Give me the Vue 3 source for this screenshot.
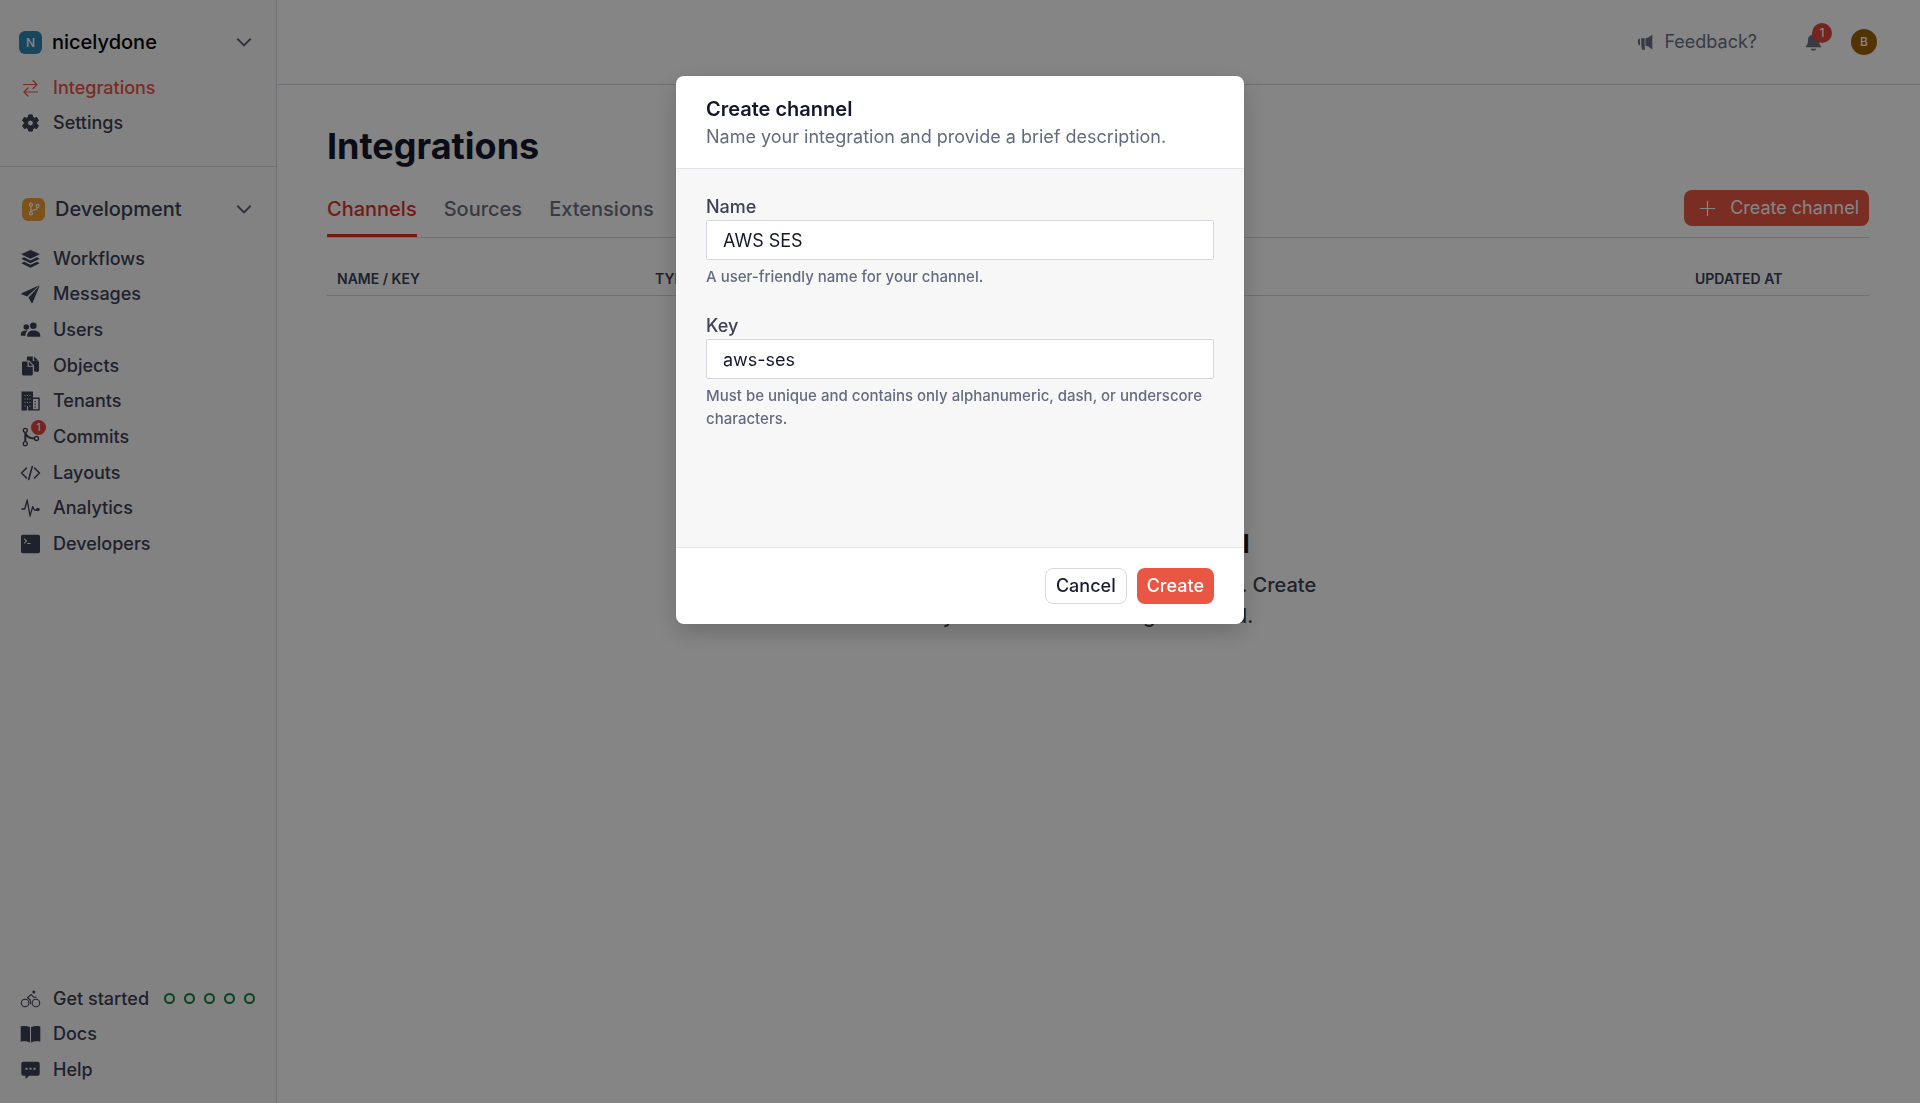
<script setup>
import { ref } from 'vue'

const iconPaths = {
  gear: '<path fill-rule="evenodd" d="M8.2 1h3.600l.5 2.400 1.600.9 2.300-.8 1.800 3.100-1.800 1.600v1.800l1.800 1.600-1.800 3.100-2.300-.8-1.600.9-.5 2.400H8.200l-.5-2.400-1.600-.9-2.300.8L2 11.600 3.800 10V8.200L2 6.600l1.800-3.100 2.300.8 1.600-.9zM10 6.200a2.900 2.900 0 1 0 0 5.800 2.900 2.900 0 0 0 0-5.800z" transform="translate(0 .9)" stroke="currentColor" stroke-width="1" stroke-linejoin="round"/>',
  integrations: '<path d="M3 6.500h13.500M12.500 2.500l4 4-4 4M17 14H3.500M7.500 10l-4 4 4 4" fill="none" stroke="currentColor" stroke-width="1.200" stroke-linecap="round" stroke-linejoin="round"/>',
  workflows: '<path d="M10 1.200 18.800 5.200 10 9.400 1.200 5.200z" stroke="currentColor" stroke-width=".6" stroke-linejoin="round"/><path d="M3.600 8.300 10 11.400l6.400-3.100 2.400 1.200v.5L10 14.200 1.200 10v-.5z"/><path d="M3.600 12.700l6.400 3.100 6.400-3.100 2.400 1.200v.5L10 18.700l-8.800-4.300v-.5z"/>',
  messages: '<path d="M18.900 1.200 1 9.300v1l5.600 2.100z"/><path d="M19.400 1.200 8 13.400l3.100 5.600h.9z"/>',
  users: '<circle cx="12.800" cy="5.800" r="3.300"/><path d="M6.800 16.800v-1.500c0-3.200 2.500-4.800 6.200-4.800s6.700 1.600 6.700 4.800v1.500z"/><circle cx="5.800" cy="7" r="2.800"/><path d="M.3 15.800v-1.300c0-2.700 2-4 5.200-4l1.700.1c-1.600 1.200-2.300 2.800-2.200 5.200z"/>',
  objects: '<path d="M7.500.5h4.800V5h5.200v9.300c0 .7-.5 1.200-1.200 1.200H13.500V9.500L8.800 4.500H6.300V1.700C6.300 1 6.800.5 7.500.5z"/><path d="M13.500.5l4.600 4.200h-4.600zM18.500 5.500v9c0 .7-.5 1.200-1.200 1.200H15V5.500z"/><path d="M2.700 5.500H7v5.300h5.300v7.500c0 .7-.5 1.200-1.200 1.200H2.700c-.7 0-1.200-.5-1.200-1.200V6.700c0-.7.500-1.200 1.200-1.200z"/><path d="M8.200 5.500l4.200 4.200H8.200z"/>',
  tenants: '<path fill-rule="evenodd" d="M1 .5h11.500v6h6.700V19.500H1zM4 4v1h1V4zm2.500 0v1h1V4zM9 4v1h1V4zM4 7.500v1h1v-1zm2.500 0v1h1v-1zm2.500 0v1h1v-1zM4 11v1h1v-1zm2.500 0v1h1v-1zm2.500 0v1h1v-1zM6.500 15v4.500h1V15zM4 14.500v1h1v-1zm5 0v1h1v-1zM12.500 8v10.200h5.300V8z"/><path d="M14 10h1.200v1.200H14zM14 12.800h1.200V14H14zM14 15.500h1.200v1.200H14z"/>',
  commits: '<g fill="none" stroke="currentColor"><circle cx="4.800" cy="3.300" r="2" stroke-width="1.300"/><circle cx="4.800" cy="16.700" r="2" stroke-width="1.300"/><circle cx="16" cy="11.500" r="2" stroke-width="1.300"/><path d="M4.800 5.500v9M5 6c1 3.500 4 5.500 9 5.500" stroke-width="2"/></g>',
  layouts: '<path d="M6 5 1 10l5 5M14 5l5 5-5 5M11.800 3.500l-3.600 13" fill="none" stroke="currentColor" stroke-width="1.500" stroke-linecap="round" stroke-linejoin="round"/>',
  analytics: '<path d="M1.500 11h2.700L6.700 2l2.800 16 2.800-9.500 1.500 3.500H17" fill="none" stroke="currentColor" stroke-width="1.300" stroke-linecap="round" stroke-linejoin="round"/><circle cx="17.400" cy="11.500" r="1.800"/>',
  developers: '<path fill-rule="evenodd" d="M2.500.7h15A1.800 1.800 0 0 1 19.500 2.500v15a1.800 1.800 0 0 1-2 1.800h-15A1.800 1.800 0 0 1 .5 17.500v-15A1.800 1.800 0 0 1 2.500.7zM4 4.200 3.300 5l2 2-2 2 .7.800L6.800 7zM6.800 9v1H10V9z"/>',
  bike: '<g fill="none" stroke="currentColor" stroke-width="1.100" stroke-linejoin="round" stroke-linecap="round"><circle cx="4.600" cy="14" r="3.800"/><circle cx="15.400" cy="14" r="3.800"/><path d="M9.800 14.500V11L7 8.700l3.800-3.200L13 8.200h2.600"/></g><circle cx="13.300" cy="3" r="1.500"/>',
  docs: '<path d="M.2 2.400c3.200-.7 6.800-.5 9.300.8v15.600c-2.500-1.500-6.100-1.800-9.300-1zM19.800 2.400c-3.200-.7-6.800-.5-9.300.8v15.600c2.500-1.500 6.100-1.800 9.300-1z"/>',
  help: '<path fill-rule="evenodd" d="M2.800 1.700h14.400a2 2 0 0 1 2 2v10a2 2 0 0 1-2 2H8.700L5 19v-3.300H2.800a2 2 0 0 1-2-2v-10a2 2 0 0 1 2-2zM5 7.800v2h2v-2zm4 0v2h2v-2zm4 0v2h2v-2z"/>'
}

const account = [
  { label: 'Integrations', icon: 'integrations', active: true },
  { label: 'Settings', icon: 'gear' }
]
const environment = [
  { label: 'Workflows', icon: 'workflows' },
  { label: 'Messages', icon: 'messages' },
  { label: 'Users', icon: 'users' },
  { label: 'Objects', icon: 'objects' },
  { label: 'Tenants', icon: 'tenants' },
  { label: 'Commits', icon: 'commits', badge: 1 },
  { label: 'Layouts', icon: 'layouts' },
  { label: 'Analytics', icon: 'analytics' },
  { label: 'Developers', icon: 'developers' }
]
const support = [
  { label: 'Get started', icon: 'bike', steps: 5 },
  { label: 'Docs', icon: 'docs' },
  { label: 'Help', icon: 'help' }
]
const tabs = ['Channels', 'Sources', 'Extensions']

const open = ref(true)
const name = ref('AWS SES')
const key = ref('aws-ses')
</script>

<template>
  <div class="app">
    <aside class="sidebar">
      <section class="account">
        <button class="switcher" type="button">
          <span class="logo logo-blue">N</span>
          <span class="switcher-name">nicelydone</span>
          <svg class="chevron" viewBox="0 0 16 16"><path d="M2 5l6 6 6-6" /></svg>
        </button>
        <nav class="items">
          <a v-for="item in account" :key="item.label" href="#" class="item" :class="{ active: item.active }">
            <span class="icon"><svg viewBox="0 0 20 20" v-html="iconPaths[item.icon]" /></span>
            {{ item.label }}
          </a>
        </nav>
      </section>
      <section class="environment">
        <button class="switcher env" type="button">
          <span class="logo logo-orange">
            <svg viewBox="0 0 16 16"><circle cx="4.500" cy="3" r="1.700" /><circle cx="4.500" cy="13" r="1.700" /><circle cx="12" cy="4.500" r="1.700" /><path d="M4.500 4.700v6.600M12 6.200c0 3-4 2.800-7.500 4" /></svg>
          </span>
          <span class="switcher-name">Development</span>
          <svg class="chevron" viewBox="0 0 16 16"><path d="M2 5l6 6 6-6" /></svg>
        </button>
        <nav class="items">
          <a v-for="item in environment" :key="item.label" href="#" class="item">
            <span class="icon">
              <svg viewBox="0 0 20 20" v-html="iconPaths[item.icon]" />
              <span v-if="item.badge" class="badge">{{ item.badge }}</span>
            </span>
            {{ item.label }}
          </a>
        </nav>
      </section>
      <nav class="items support">
        <a v-for="item in support" :key="item.label" href="#" class="item">
          <span class="icon"><svg viewBox="0 0 20 20" v-html="iconPaths[item.icon]" /></span>
          {{ item.label }}
          <span v-if="item.steps" class="steps"><i v-for="n in item.steps" :key="n" /></span>
        </a>
      </nav>
    </aside>

    <div class="content">
      <header class="topbar">
        <a href="#" class="feedback">
          <svg viewBox="0 0 20 20"><path d="M18 1.500v17l-2-1c-2-2-3.500-2.700-6-3V5.500c2.500-.3 4-1 6-3zM5 5.500h4v9l.5 4.500H6L5 14.500zM3.500 6v8A3 3 0 0 1 1 11V9a3 3 0 0 1 2.500-3z" /></svg>
          Feedback?
        </a>
        <button class="bell" type="button" aria-label="Notifications">
          <svg viewBox="0 0 20 20"><path d="M10 1c.8 0 1.300.5 1.300 1.300 3 .6 4.500 2.700 4.500 5.700 0 4 1 5 2.200 6.500v1H2v-1C3.200 13 4.200 12 4.200 8c0-3 1.500-5.100 4.500-5.700C8.700 1.500 9.200 1 10 1zM7 17h6c-.4 1.400-1.500 2-3 2s-2.600-.6-3-2z" /></svg>
          <span class="badge">1</span>
        </button>
        <button class="avatar" type="button">B</button>
      </header>

      <main>
        <h1>Integrations</h1>
        <div class="tabbar">
          <nav class="tabs">
            <a v-for="(tab, i) in tabs" :key="tab" href="#" :class="{ current: i === 0 }">{{ tab }}</a>
          </nav>
          <button class="primary add" type="button" @click="open = true">
            <svg viewBox="0 0 18 18"><path d="M9 1v16M1 9h16" /></svg>
            Create channel
          </button>
        </div>
        <table>
          <thead>
            <tr><th class="col-name">Name / Key</th><th class="col-type">Type</th><th class="col-date">Updated at</th></tr>
          </thead>
        </table>
        <section class="empty">
          <h2>Create your first channel</h2>
          <p>You haven’t configured your channels. Create your next channel to get started.</p>
        </section>
      </main>
    </div>

    <div v-if="open" class="overlay">
      <form class="modal" role="dialog" aria-labelledby="modal-title" @submit.prevent="open = false">
        <header>
          <h3 id="modal-title">Create channel</h3>
          <p>Name your integration and provide a brief description.</p>
        </header>
        <div class="fields">
          <div class="field">
            <label for="channel-name">Name</label>
            <input id="channel-name" v-model="name" type="text">
            <p>A user-friendly name for your channel.</p>
          </div>
          <div class="field">
            <label for="channel-key">Key</label>
            <input id="channel-key" v-model="key" type="text">
            <p>Must be unique and contains only alphanumeric, dash, or underscore characters.</p>
          </div>
        </div>
        <footer>
          <button class="secondary" type="button" @click="open = false">Cancel</button>
          <button class="primary" type="submit">Create</button>
        </footer>
      </form>
    </div>
  </div>
</template>

<style>
body {
  margin: 0;
}
</style>

<style scoped>
* {
  box-sizing: border-box;
}
.app {
  display: flex;
  min-height: 100vh;
  font: 500 18px/24px Inter, "Liberation Sans", sans-serif;
  color: #3d4055;
  background: #fff;
}
a {
  color: inherit;
  text-decoration: none;
}
button {
  font: inherit;
  color: inherit;
  border: 0;
  background: none;
  padding: 0;
  cursor: pointer;
}
h1, h2, h3, p {
  margin: 0;
}
svg {
  fill: currentColor;
}
.sidebar {
  display: flex;
  flex-direction: column;
  flex: none;
  width: 277px;
  background: #fafafa;
  border-right: 1px solid #d5d7dc;
}
.account {
  padding: 24px 0 25px;
  border-bottom: 1px solid #d5d7dc;
}
.environment {
  padding-top: 24px;
}
.switcher {
  display: flex;
  align-items: center;
  gap: 10px;
  width: 100%;
  height: 36px;
  padding: 0 23px 0 19px;
  margin-bottom: 10px;
  font-size: 20px;
  color: #000;
  text-align: left;
}
.env {
  padding-left: 22px;
  margin-bottom: 14px;
  color: #3d4055;
}
.switcher-name {
  flex: 1;
}
.logo {
  display: grid;
  place-items: center;
  width: 23px;
  height: 23px;
  border-radius: 6px;
  font-size: 12px;
  color: #fff;
}
.logo svg {
  width: 14px;
  height: 14px;
  fill: none;
  stroke: currentColor;
  stroke-width: 1.4;
}
.logo-blue {
  background: #2f87b4;
}
.logo-orange {
  background: #ee9f37;
}
.chevron {
  width: 18px;
  height: 18px;
  fill: none;
  stroke: #5a6078;
  stroke-width: 1.8;
}
.items {
  display: grid;
  grid-auto-rows: 1fr;
}
.account .items {
  height: 71px;
}
.environment .items {
  height: 321px;
}
.support {
  height: 122px;
  margin-top: auto;
  padding-bottom: 15px;
}
.item {
  display: flex;
  align-items: center;
  padding-left: 20px;
}
.item.active {
  color: #e95744;
}
.icon {
  position: relative;
  display: flex;
  width: 21px;
  height: 20px;
  margin-right: 12px;
}
.icon svg {
  width: 21px;
  height: 20px;
}
.badge {
  position: absolute;
  top: -7px;
  right: -5px;
  width: 15px;
  border-radius: 50%;
  background: #e0463f;
  color: #fff;
  font-size: 10px;
  line-height: 15px;
  text-align: center;
}
.steps {
  display: flex;
  gap: 9px;
  margin-left: 15px;
}
.steps i {
  width: 11px;
  height: 11px;
  border: 2px solid #15803d;
  border-radius: 50%;
}
.content {
  flex: 1;
  min-width: 0;
}
.topbar {
  display: flex;
  align-items: center;
  justify-content: flex-end;
  height: 85px;
  padding-right: 43px;
  border-bottom: 1px solid #d5d7dc;
  color: #6b7186;
}
.feedback {
  display: flex;
  align-items: center;
  gap: 10px;
  font-weight: 400;
}
.feedback svg {
  width: 17px;
  height: 18px;
}
.bell {
  position: relative;
  display: flex;
  margin: 0 28px 0 47px;
}
.bell svg {
  width: 19px;
  height: 20px;
}
.bell .badge {
  top: -9px;
  right: -9px;
  width: 20px;
  font-size: 12px;
  line-height: 20px;
}
.avatar {
  width: 26px;
  height: 26px;
  border-radius: 50%;
  background: #a16207;
  color: #fff;
  font-size: 12px;
}
main {
  padding: 39px 51px 0 50px;
}
h1 {
  font-size: 36px;
  font-weight: 700;
  line-height: 44px;
  color: #15172e;
}
.tabbar {
  display: flex;
  align-items: flex-start;
  justify-content: space-between;
  height: 70px;
  padding-top: 22px;
  border-bottom: 1px solid #d5d7dc;
}
.tabs {
  display: flex;
  gap: 27px;
  font-size: 20px;
  line-height: 38px;
  color: #6b7280;
}
.tabs a {
  height: 47px;
}
.tabs .current {
  color: #dc3526;
  border-bottom: 3px solid #dc3526;
}
.primary,
.secondary {
  height: 36px;
  padding: 0 10px;
  border-radius: 8px;
}
.primary {
  background: #e95744;
  color: #fff;
}
.secondary {
  border: 1px solid #d8dae2;
  color: #1a1c35;
  background: #fff;
}
.add {
  display: flex;
  align-items: center;
  gap: 14px;
  padding-left: 15px;
  font-weight: 400;
}
.add svg {
  width: 17px;
  height: 17px;
  fill: none;
  stroke: currentColor;
  stroke-width: 1.3;
}
table {
  width: 100%;
  table-layout: fixed;
  border-collapse: collapse;
  border-bottom: 1px solid #d5d7dc;
}
th {
  height: 57px;
  padding: 26px 0 0 10px;
  font-size: 14px;
  font-weight: 600;
  line-height: 20px;
  text-align: left;
  text-transform: uppercase;
}
.col-name {
  width: 318px;
}
.col-date {
  width: 184px;
}
.empty {
  max-width: 460px;
  margin: 232px auto 0;
  text-align: center;
}
.empty h2 {
  font-size: 25px;
  font-weight: 700;
  line-height: 32px;
  color: #15172e;
}
.empty p {
  margin-top: 10px;
  font-size: 20px;
  line-height: 31px;
}
.overlay {
  position: fixed;
  inset: 0;
  display: flex;
  align-items: flex-start;
  justify-content: center;
  padding-top: 76px;
  background: rgba(0, 0, 0, 0.48);
}
.modal {
  display: flex;
  flex-direction: column;
  width: 568px;
  overflow: hidden;
  border-radius: 8px;
  background: #fff;
  box-shadow: 0 8px 24px rgba(0, 0, 0, 0.2);
}
.modal header {
  padding: 19px 30px 17px;
  border-bottom: 1px solid #e2e4e9;
}
.modal h3 {
  font-size: 20px;
  font-weight: 600;
  line-height: 28px;
  color: #15172e;
}
.modal header p {
  font-weight: 400;
  line-height: 28px;
  color: #646b80;
}
.fields {
  display: flex;
  flex-direction: column;
  gap: 26px;
  min-height: 378px;
  padding: 26px 30px;
  background: #f7f7f8;
}
.field label {
  display: block;
}
.field input {
  display: block;
  width: 100%;
  height: 40px;
  margin: 1px 0 5px;
  padding: 0 16px;
  border: 1px solid #d5d7dc;
  border-radius: 2px;
  background: #fff;
  color: #15172e;
  font: inherit;
  font-weight: 400;
}
.field p {
  font-size: 15px;
  line-height: 23px;
  color: #646b80;
}
.modal footer {
  display: flex;
  justify-content: flex-end;
  gap: 10px;
  padding: 20px 30px;
  border-top: 1px solid #e2e4e9;
}
</style>
